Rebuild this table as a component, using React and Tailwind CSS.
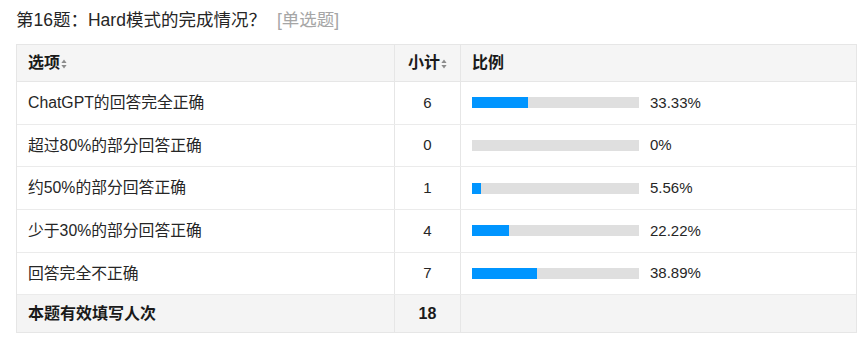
import React from "react";

const rows = [
  { label: "ChatGPT的回答完全正确", count: 6, pct: 33.33 },
  { label: "超过80%的部分回答正确", count: 0, pct: 0 },
  { label: "约50%的部分回答正确", count: 1, pct: 5.56 },
  { label: "少于30%的部分回答正确", count: 4, pct: 22.22 },
  { label: "回答完全不正确", count: 7, pct: 38.89 },
];

function SortIcon() {
  return (
    <svg width="6" height="10" viewBox="0 0 6 10" className="ml-[1px] mt-[2px]">
      <path d="M3 0.5 L5.6 4 H0.4 Z" fill="#8c8c8c" />
      <path d="M3 9.5 L5.6 6 H0.4 Z" fill="#8c8c8c" />
    </svg>
  );
}

function formatPct(p) {
  return p === 0 ? "0%" : p.toFixed(2) + "%";
}

export default function App() {
  return (
    <div
      className="w-[865px] h-[342px] bg-white pl-4 pt-[8px] text-[#262626]"
      style={{ fontFamily: '"Liberation Sans", Arial, "Noto Sans CJK SC", sans-serif' }}
    >
      <div className="flex h-[24px] items-center text-[17.5px] leading-[24px]">
        <span>第16题：Hard模式的完成情况？</span>
        <span className="ml-[11px] text-[#a6a6a6]">[单选题]</span>
      </div>

      <div className="mt-[12px] w-[841px] border border-[#e6e6e6]">
        <div className="grid h-[37px] grid-cols-[378px_66px_395px] border-b border-[#e6e6e6] bg-[#f5f5f5] text-[16px] font-bold text-[#1a1a1a]">
          <div className="flex items-center border-r border-[#e6e6e6] pl-[11px]">
            选项
            <SortIcon />
          </div>
          <div className="flex items-center justify-center border-r border-[#e6e6e6]">
            小计
            <SortIcon />
          </div>
          <div className="flex items-center pl-[11px]">比例</div>
        </div>

        {rows.map((r) => (
          <div
            key={r.label}
            className="grid h-[42.7px] grid-cols-[378px_66px_395px] border-b border-[#ebebeb]"
          >
            <div className="flex items-center border-r border-[#e6e6e6] pl-[11px] text-[15.8px]">
              {r.label}
            </div>
            <div className="flex items-center justify-center border-r border-[#e6e6e6] text-[15px]">
              {r.count}
            </div>
            <div className="flex items-center pl-[11px] text-[15px]">
              <div className="h-[11px] w-[167px] bg-[#dfdfdf]">
                <div
                  className="h-full bg-[#0095ff]"
                  style={{ width: `${r.pct}%` }}
                />
              </div>
              <span className="ml-[11px]">{formatPct(r.pct)}</span>
            </div>
          </div>
        ))}

        <div className="grid h-[37px] grid-cols-[378px_66px_395px] bg-[#f4f4f4] text-[16px] font-bold text-[#1a1a1a]">
          <div className="flex items-center border-r border-[#e6e6e6] pl-[11px]">
            本题有效填写人次
          </div>
          <div className="flex items-center justify-center border-r border-[#e6e6e6] text-[16px]">
            18
          </div>
          <div />
        </div>
      </div>
    </div>
  );
}
